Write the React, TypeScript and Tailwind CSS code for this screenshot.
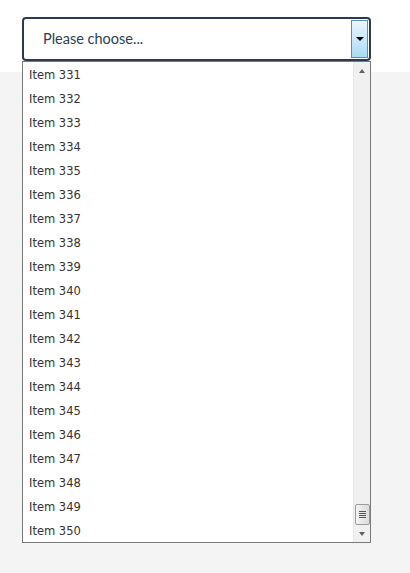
const items = Array.from({ length: 20 }, (_, i) => `Item ${331 + i}`);

function ScrollBar() {
  return (
    <div className="w-[17px] bg-[#f0f0f0] border-l border-[#e8e8e8] flex flex-col items-center">
      <div className="h-[17px] w-full flex items-center justify-center">
        <div className="w-0 h-0 border-l-[3.5px] border-r-[3.5px] border-b-[4px] border-l-transparent border-r-transparent border-b-[#606060]" />
      </div>
      <div className="flex-1" />
      <div className="w-[15px] h-[21px] rounded-[2px] border border-[#9b9b9b] bg-gradient-to-r from-[#f3f3f3] to-[#dcdcdc] flex flex-col items-center justify-center gap-[1px]">
        <div className="w-[7px] h-px bg-[#555]" />
        <div className="w-[7px] h-px bg-[#555]" />
        <div className="w-[7px] h-px bg-[#555]" />
        <div className="w-[7px] h-px bg-[#555]" />
      </div>
      <div className="h-[17px] w-full flex items-center justify-center">
        <div className="w-0 h-0 border-l-[3.5px] border-r-[3.5px] border-t-[4px] border-l-transparent border-r-transparent border-t-[#606060]" />
      </div>
    </div>
  );
}

export default function App() {
  return (
    <div className="min-h-[573px] bg-[#f4f4f4]">
      <div className="h-[72px] bg-white pt-[17px] px-[22px]">
        <div className="relative w-[349px]">
          <div className="h-[44px] border-2 border-[#2c3b4b] rounded-[4px] bg-white flex items-stretch">
            <div className="flex-1 flex items-center pl-[19px] text-[14.5px] text-[#2c3e50] font-['Lato',sans-serif]">
              Please choose...
            </div>
            <div className="w-[17px] my-px mr-px border border-[#5b8db8] bg-gradient-to-b from-[#eaf6fd] to-[#a9dbf6] flex items-center justify-center">
              <div className="w-0 h-0 border-l-[4px] border-r-[4px] border-t-[4px] border-l-transparent border-r-transparent border-t-black" />
            </div>
          </div>
          <div className="absolute left-0 top-[44px] w-[349px] h-[482px] border border-[#7a7a7a] bg-white flex">
            <ul className="flex-1 font-['DejaVu_Sans',sans-serif] text-[11.5px] text-[#333]">
              {items.map((it) => (
                <li key={it} className="h-[24px] flex items-center pl-[6px] pt-[4px]">
                  {it}
                </li>
              ))}
            </ul>
            <ScrollBar />
          </div>
        </div>
      </div>
    </div>
  );
}
